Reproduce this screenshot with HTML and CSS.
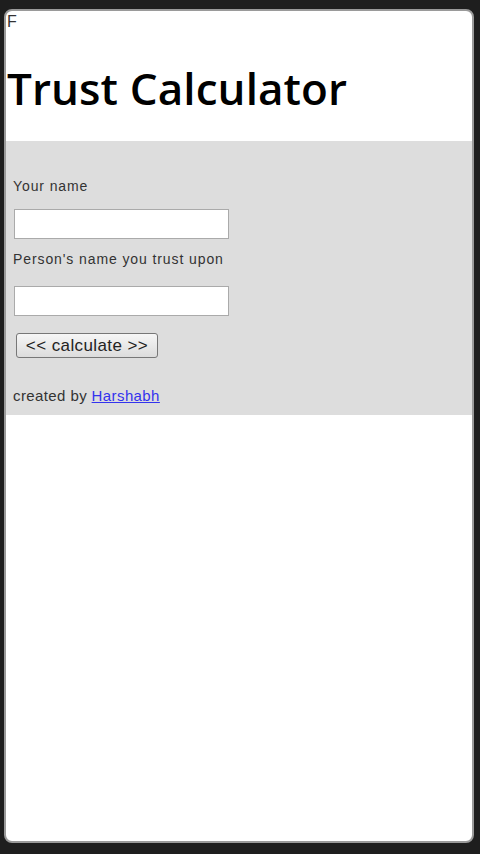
FILE: index.html
```html
<!DOCTYPE html>
<html lang="en">
<head>
  <meta charset="UTF-8">
  <meta name="viewport" content="width=device-width, initial-scale=1.0">
  <title>Trust Calculator</title>
  <link rel="stylesheet" href="styles.css">
</head>
<body>
  <div class="screen">
    <div class="header">
      <div class="mark">F</div>
      <h1>Trust Calculator</h1>
    </div>
    <div class="form">
      <label for="you">Your name</label>
      <input type="text" id="you" class="first">
      <label for="other">Person's name you trust upon</label>
      <input type="text" id="other" class="second">
      <button>&lt;&lt; calculate &gt;&gt;</button>
      <div class="credit">created by <a href="#">Harshabh</a></div>
    </div>
  </div>
</body>
</html>
```

FILE: styles.css
```css
body {
  margin: 0;
  background: #1e1e1e;
  font-family: "Liberation Sans", Arial, sans-serif;
}
.screen {
  margin: 9px 6px 0 4px;
  height: 830px;
  background: #fff;
  border: 2px solid #9a9a9a;
  border-radius: 8px;
  overflow: hidden;
}
.header {
  height: 130px;
  padding: 3px 0 0 1px;
  box-sizing: border-box;
}
.mark {
  font-size: 16px;
  line-height: 16px;
  color: #333;
}
h1 {
  margin: 34px 0 0 0;
  font-family: "Open Sans", "DejaVu Sans", sans-serif;
  font-size: 44px;
  font-weight: 650;
  letter-spacing: 0.1px;
  line-height: 48px;
  color: #000;
}
.form {
  background: #dddddd;
  height: 274px;
  padding: 35px 0 0 7px;
  box-sizing: border-box;
}
label {
  display: block;
  font-size: 14px;
  color: #333;
  letter-spacing: 0.9px;
  line-height: 20px;
}
input {
  display: block;
  width: 215px;
  height: 30px;
  box-sizing: border-box;
  margin-left: 1px;
  border: 1px solid #aaa;
  background: #fff;
}
input.first {
  margin-top: 13px;
  margin-bottom: 10px;
}
input.second {
  margin-top: 17px;
}
button {
  display: block;
  margin: 17px 0 0 3px;
  width: 142px;
  height: 25px;
  padding: 0;
  font-family: "Liberation Sans", Arial, sans-serif;
  font-size: 17px;
  letter-spacing: 0.4px;
  color: #222;
  border: 1px solid #777;
  border-radius: 3px;
  background: linear-gradient(#f6f6f6, #dcdcdc);
}
.credit {
  margin-top: 29px;
  font-size: 15px;
  line-height: 18px;
  letter-spacing: 0.4px;
  color: #333;
}
.credit a {
  color: #3333ee;
}
```
